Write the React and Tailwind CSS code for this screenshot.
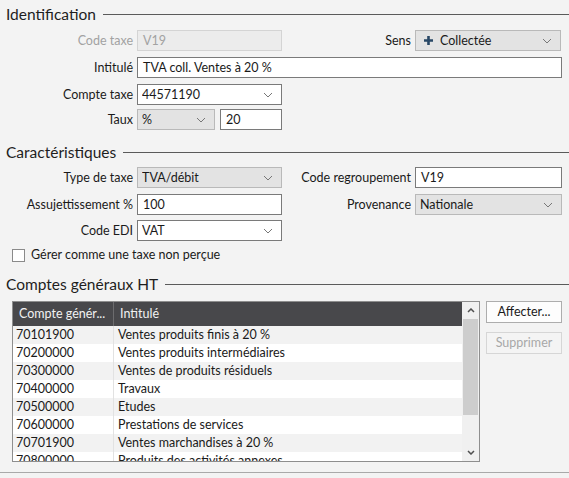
import React from 'react';

const font = { fontFamily: 'Lato, "Noto Sans", "Liberation Sans", sans-serif' };

const Chevron = () => (
  <svg width="10" height="6" viewBox="0 0 10 6" className="shrink-0">
    <path d="M1 1 L5 5 L9 1" fill="none" stroke="#777777" strokeWidth="1" />
  </svg>
);

const SectionTitle = ({ children, className = '' }) => (
  <div className={`flex items-center gap-[7px] pl-[6px] ${className}`}>
    <span className="text-[15.5px] leading-5 text-[#1e1e1e]">{children}</span>
    <div className="flex-1 h-px bg-[#5a5a5a]" />
  </div>
);

const Label = ({ children, muted, width = 'w-[137px]' }) => (
  <div className={`${width} shrink-0 pr-[4px] text-right ${muted ? 'text-[#a2a2a2]' : 'text-[#1a1a1a]'}`}>
    {children}
  </div>
);

const Input = ({ value, width = 'w-[145px]', disabled }) => (
  <div
    className={`${width} h-[21px] flex items-center px-[5px] border ${
      disabled ? 'bg-[#ececec] border-[#d4d4d4] text-[#a2a2a2]' : 'bg-white border-[#7a7a7a] text-[#1a1a1a]'
    }`}
  >
    {value}
  </div>
);

const Select = ({ value, width = 'w-[145px]', gray, icon }) => (
  <div
    className={`${width} h-[21px] flex items-center pl-[4px] pr-[8px] border ${
      gray ? 'bg-[#e3e3e3] border-[#b9b9b9]' : 'bg-white border-[#7a7a7a]'
    } text-[#1a1a1a]`}
  >
    {icon}
    <span className="flex-1 truncate">{value}</span>
    <Chevron />
  </div>
);

const rows = [
  ['70101900', 'Ventes produits finis à 20 %'],
  ['70200000', 'Ventes produits intermédiaires'],
  ['70300000', 'Ventes de produits résiduels'],
  ['70400000', 'Travaux'],
  ['70500000', 'Etudes'],
  ['70600000', 'Prestations de services'],
  ['70701900', 'Ventes marchandises à 20 %'],
  ['70800000', 'Produits des activités annexes'],
];

export default function App() {
  return (
    <div style={font} className="w-[569px] h-[478px] overflow-hidden bg-[#f3f3f3] text-[12.5px] leading-4">
      <SectionTitle className="pt-[4px]">Identification</SectionTitle>

      <div className="flex items-center mt-[6px]">
        <Label muted>Code taxe</Label>
        <Input value="V19" disabled />
        <Label width="w-[133px]">Sens</Label>
        <Select
          value="Collectée"
          width="w-[146px]"
          gray
          icon={
            <svg width="9" height="9" viewBox="0 0 9 9" className="ml-[4px] mr-[7px] shrink-0">
              <path d="M3.2 0h2.6v3.2H9v2.6H5.8V9H3.2V5.8H0V3.2h3.2z" fill="#294866" />
            </svg>
          }
        />
      </div>

      <div className="flex items-center mt-[6px]">
        <Label>Intitulé</Label>
        <Input value="TVA coll. Ventes à 20 %" width="w-[425px]" />
      </div>

      <div className="flex items-center mt-[6px]">
        <Label>Compte taxe</Label>
        <Select value="44571190" />
      </div>

      <div className="flex items-center mt-[4px]">
        <Label>Taux</Label>
        <Select value="%" width="w-[78px]" gray />
        <div className="w-[5px]" />
        <Input value="20" width="w-[62px]" />
      </div>

      <SectionTitle className="mt-[12px]">Caractéristiques</SectionTitle>

      <div className="flex items-center mt-[5px]">
        <Label>Type de taxe</Label>
        <Select value="TVA/débit" gray />
        <Label width="w-[133px]">Code regroupement</Label>
        <Input value="V19" width="w-[147px]" />
      </div>

      <div className="flex items-center mt-[6px]">
        <Label>Assujettissement %</Label>
        <Input value="100" />
        <Label width="w-[133px]">Provenance</Label>
        <Select value="Nationale" width="w-[147px]" gray />
      </div>

      <div className="flex items-center mt-[5px]">
        <Label>Code EDI</Label>
        <Select value="VAT" />
      </div>

      <div className="flex items-center gap-[6px] pl-[12px] mt-[6px]">
        <div className="w-[13px] h-[13px] bg-white border border-[#8a8a8a]" />
        <span className="text-[#1a1a1a]">Gérer comme une taxe non perçue</span>
      </div>

      <SectionTitle className="mt-[11px]">Comptes généraux HT</SectionTitle>

      <div className="flex items-start mt-[7px] pl-[12px]">
        <div className="w-[468px] h-[161px] border border-[#8e8e8e] bg-white flex overflow-hidden">
          <div className="flex-1 flex flex-col overflow-hidden">
            <div className="h-[24px] shrink-0 flex bg-[#48484b] text-[#f2f2f2]">
              <div className="w-[101px] flex items-center pl-[6px] border-r border-[#6c6c6e]">Compte génér...</div>
              <div className="flex-1 flex items-center pl-[6px]">Intitulé</div>
            </div>
            {rows.map(([code, label], i) => (
              <div
                key={code}
                className={`h-[18px] shrink-0 flex text-[#1a1a1a] ${i % 2 === 0 ? 'bg-[#f2f2f2]' : 'bg-white'}`}
              >
                <div className="w-[101px] flex items-center pl-[3px] border-r border-[#e2e2e2]">{code}</div>
                <div className="flex-1 flex items-center pl-[4px]">{label}</div>
              </div>
            ))}
          </div>
          <div className="w-[17px] shrink-0 bg-[#f0f0f0] flex flex-col items-center">
            <div className="h-[17px] flex items-center justify-center">
              <svg width="8" height="5" viewBox="0 0 8 5">
                <path d="M1 4 L4 1 L7 4" fill="none" stroke="#505050" strokeWidth="1.5" />
              </svg>
            </div>
            <div className="w-[15px] h-[96px] bg-[#cdcdcd]" />
            <div className="flex-1" />
            <div className="h-[17px] flex items-center justify-center">
              <svg width="8" height="5" viewBox="0 0 8 5">
                <path d="M1 1 L4 4 L7 1" fill="none" stroke="#505050" strokeWidth="1.5" />
              </svg>
            </div>
          </div>
        </div>

        <div className="flex flex-col gap-[9px] ml-[6px]">
          <div className="w-[76px] h-[22px] flex items-center justify-center bg-[#fdfdfd] border border-[#adadad] text-[#1a1a1a]">
            Affecter...
          </div>
          <div className="w-[76px] h-[22px] flex items-center justify-center bg-[#f4f4f4] border border-[#d6d6d6] text-[#a8a8a8]">
            Supprimer
          </div>
        </div>
      </div>

      <div className="mt-[10px] h-px bg-[#a9a9a9]" />
    </div>
  );
}
